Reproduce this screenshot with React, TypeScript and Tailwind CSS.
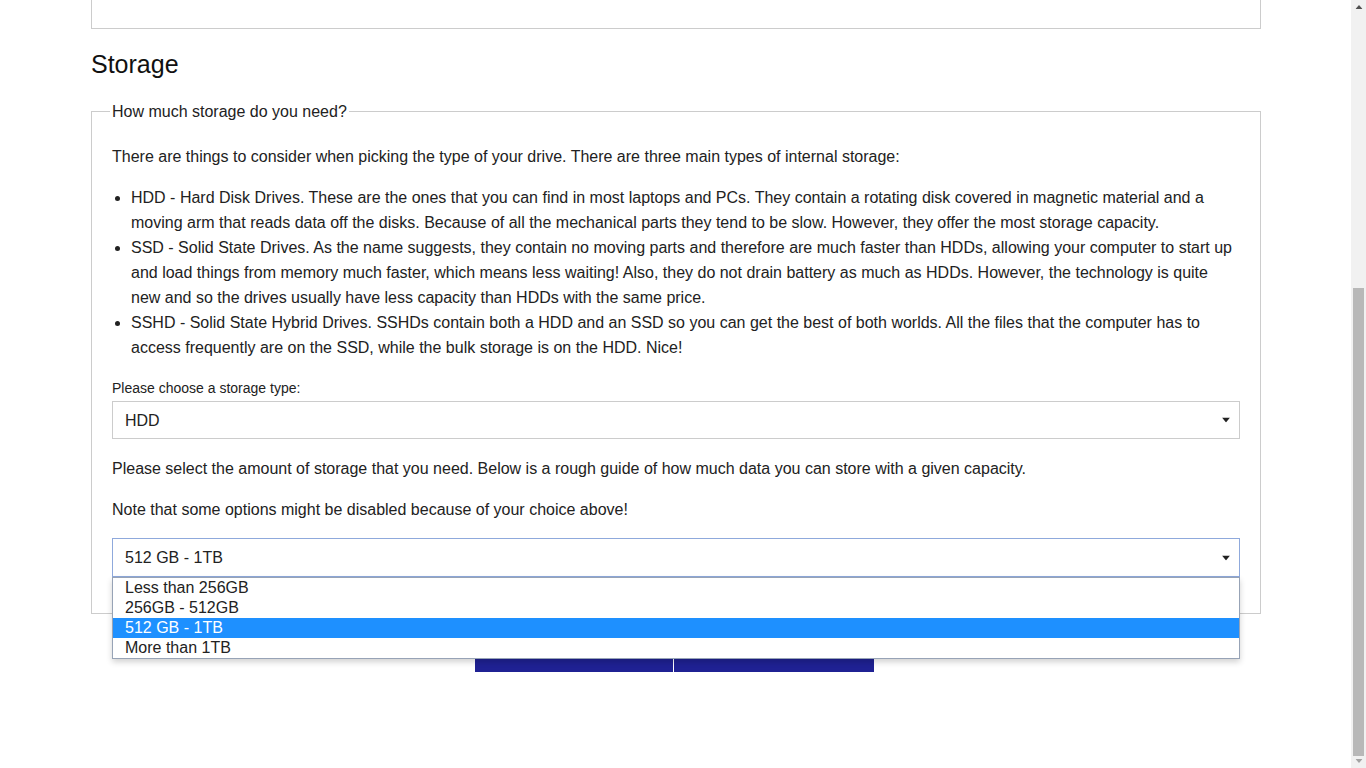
import { useState } from "react";

const storageOptions = ["Less than 256GB", "256GB - 512GB", "512 GB - 1TB", "More than 1TB"];

function Caret() {
  return (
    <svg width="8" height="5" viewBox="0 0 8 5" className="absolute right-[9px] top-1/2 -translate-y-1/2">
      <path d="M0 0h8L4 5z" fill="#222" />
    </svg>
  );
}

function Scrollbar() {
  return (
    <div className="relative h-full w-[15px] shrink-0 bg-[#f1f1f1]">
      <svg width="7" height="4" viewBox="0 0 7 4" className="absolute left-1/2 top-[5px] -translate-x-1/2">
        <path d="M0 4h7L3.5 0z" fill="#505050" />
      </svg>
      <div className="absolute left-[2px] right-[2px] top-[288px] h-[468px] bg-[#b8b8b8]" />
      <svg width="7" height="4" viewBox="0 0 7 4" className="absolute bottom-[5px] left-1/2 -translate-x-1/2">
        <path d="M0 0h7L3.5 4z" fill="#a3a3a3" />
      </svg>
    </div>
  );
}

export default function App() {
  const [selected] = useState(2);

  return (
    <div className="flex h-[768px] w-[1366px] overflow-hidden bg-white font-['Liberation_Sans',Arial,sans-serif] text-[16px] leading-[25px] text-[#222]">
      <main className="relative flex-1">
        <div className="ml-[91px] w-[1170px]">
          <div className="h-[29px] border-x border-b border-[#ccc]" />

          <h2 className="mt-5 text-[25px] leading-[30px] text-[#111]">Storage</h2>

          <fieldset className="mt-5 border border-[#ccc] px-5 pb-9 pt-5">
            <legend className="-ml-0.5 px-0.5">How much storage do you need?</legend>

            <p className="mb-4">
              There are things to consider when picking the type of your drive. There are three main types of internal storage:
            </p>

            <ul className="mb-[18px] list-disc pl-[19px]">
              <li>
                HDD - Hard Disk Drives. These are the ones that you can find in most laptops and PCs. They contain a rotating disk covered in magnetic material and a moving arm that reads data off the disks. Because of all the mechanical parts they tend to be slow. However, they offer the most storage capacity.
              </li>
              <li>
                SSD - Solid State Drives. As the name suggests, they contain no moving parts and therefore are much faster than HDDs, allowing your computer to start up and load things from memory much faster, which means less waiting! Also, they do not drain battery as much as HDDs. However, the technology is quite new and so the drives usually have less capacity than HDDs with the same price.
              </li>
              <li>
                SSHD - Solid State Hybrid Drives. SSHDs contain both a HDD and an SSD so you can get the best of both worlds. All the files that the computer has to access frequently are on the SSD, while the bulk storage is on the HDD. Nice!
              </li>
            </ul>

            <label className="mb-[3px] block text-[14px] leading-[20px]">Please choose a storage type:</label>
            <div className="relative flex h-[38px] items-center border border-[#ccc] bg-white px-3">
              <span>HDD</span>
              <Caret />
            </div>

            <p className="mb-4 mt-[17px]">
              Please select the amount of storage that you need. Below is a rough guide of how much data you can store with a given capacity.
            </p>
            <p className="mb-4">Note that some options might be disabled because of your choice above!</p>

            <div className="relative">
              <div className="relative flex h-[39px] items-center border border-[#8fa9dc] bg-white px-3">
                <span>{storageOptions[selected]}</span>
                <Caret />
              </div>
              <ul className="absolute left-0 right-0 top-[39px] z-10 border border-[#97a3b6] bg-white leading-[19px] shadow-[0_3px_6px_rgba(0,0,0,0.18)]">
                {storageOptions.map((opt, i) => (
                  <li key={opt} className={i === selected ? "h-5 bg-[#1e90ff] px-3 text-white" : "h-5 px-3"}>
                    {opt}
                  </li>
                ))}
              </ul>
            </div>
          </fieldset>

          <div className="mt-[19px] flex justify-center gap-px pr-[3px]">
            <button type="button" className="h-[39px] w-[198px] bg-[#1f2193] text-white">
              Back
            </button>
            <button type="button" className="h-[39px] w-[200px] bg-[#1f2193] text-white">
              Next
            </button>
          </div>
        </div>
      </main>
      <Scrollbar />
    </div>
  );
}
